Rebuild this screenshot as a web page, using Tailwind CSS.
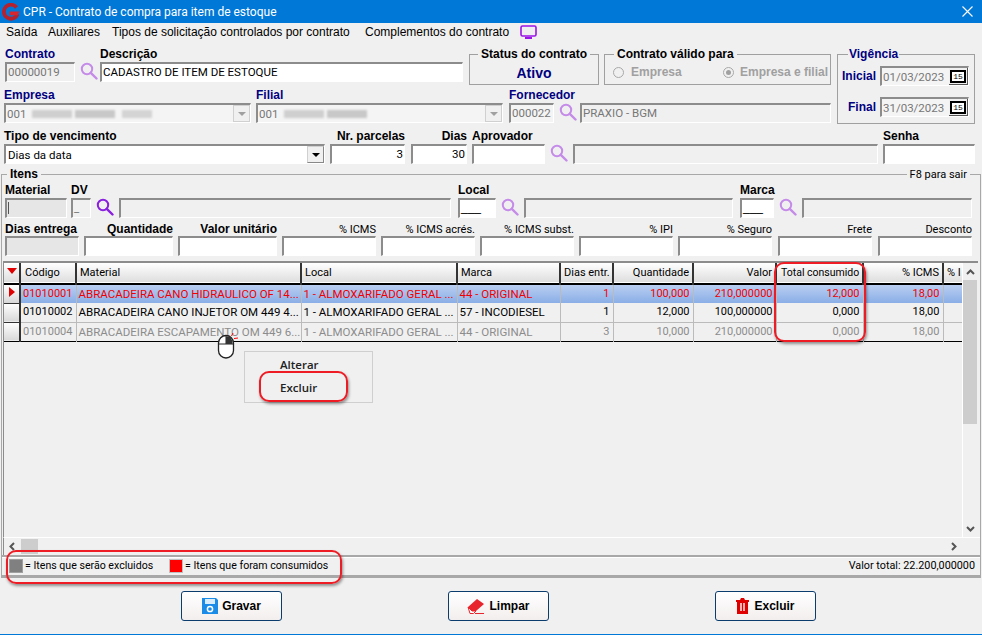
<!DOCTYPE html>
<html lang="pt-BR">
<head>
<meta charset="utf-8">
<title>CPR</title>
<script src="https://cdn.jsdelivr.net/npm/@tailwindcss/browser@4"></script>
</head>
<body class="m-0 bg-[#f0f0f0]">
<svg class="hidden">
  <symbol id="lupa" viewBox="0 0 18 18"><circle cx="7" cy="7" r="5.2" fill="none" stroke="currentColor" stroke-width="2"/><path d="M10.8 10.8L16.5 16.5" stroke="currentColor" stroke-width="2.4" stroke-linecap="round"/></symbol>
</svg>
<div class="relative w-[982px] h-[635px] overflow-hidden bg-[#f0f0f0] text-black font-['Roboto',sans-serif] text-[11.5px] leading-[16px] [&_.font-bold]:font-['Liberation_Sans',sans-serif] [&_.font-bold]:text-[12px]">

  <!-- barra de título -->
  <header class="flex items-center h-[23px] bg-[#0078d7] text-white pl-[2px] pr-[8px]">
    <svg width="18" height="18" viewBox="0 0 18 18" class="shrink-0"><path d="M14.500 4.500A7 7 0 1 0 15.500 11" fill="none" stroke="#b5222e" stroke-width="3.800"/><path d="M7.500 8.400H17.800L15.500 12.200H7.500Z" fill="#d8262f"/></svg>
    <span class="ml-[3px] text-[12px]">CPR - Contrato de compra para item de estoque</span>
    <svg width="11" height="11" viewBox="0 0 11 11" class="ml-auto mr-[1px]"><path d="M0.500 0.500L10.500 10.500M10.500 0.500L0.500 10.500" stroke="#fff" stroke-width="1.100"/></svg>
  </header>

  <!-- menu -->
  <nav class="flex items-center h-[18px] pl-[6px] font-['Liberation_Sans',sans-serif] text-[12px]">
    <span class="w-[42px]">Saída</span>
    <span class="w-[64px]">Auxiliares</span>
    <span class="w-[253px]">Tipos de solicitação controlados por contrato</span>
    <span class="w-[155px] whitespace-nowrap">Complementos do contrato</span>
    <svg width="17" height="15" viewBox="0 0 17 15"><rect x="1" y="1" width="15" height="10" rx="1.500" fill="none" stroke="#9b14e8" stroke-width="1.600"/><path d="M5 13H12" stroke="#9b14e8" stroke-width="2"/></svg>
  </nav>

  <!-- cabeçalho do contrato -->
  <section class="flex pt-[5px]">
    <div class="w-[837px] shrink-0">
      <div class="flex pl-[5px] h-[41px]">
        <div class="w-[70px]">
          <label class="block h-[16px] font-bold text-[#000080]">Contrato</label>
          <div class="h-[20px] border-t-2 border-l-2 border-r border-b border-t-[#8c8c8c] border-l-[#8c8c8c] border-r-white border-b-white bg-[#f0f0f0] text-[#777] px-[1px]">00000019</div>
        </div>
        <svg class="ml-[5px] mt-[16px] text-[#c58be8]" width="18" height="18"><use href="#lupa"/></svg>
        <div class="ml-[2px] w-[363px]">
          <label class="block h-[16px] font-bold">Descrição</label>
          <div class="h-[20px] border-t-2 border-l-2 border-r border-b border-t-[#8c8c8c] border-l-[#8c8c8c] border-r-white border-b-white bg-white px-[1px]">CADASTRO DE ITEM DE ESTOQUE</div>
        </div>
        <fieldset class="ml-[6px] w-[130px] h-[39px] border border-[#a0a0a0]">
          <legend class="ml-[8px] px-[3px] font-bold whitespace-nowrap">Status do contrato</legend>
          <div class="font-bold !text-[14px] text-center text-[#000080] mt-[3px]">Ativo</div>
        </fieldset>
        <fieldset class="ml-[5px] w-[227px] h-[39px] border border-[#a0a0a0]">
          <legend class="ml-[9px] px-[3px] font-bold whitespace-nowrap">Contrato válido para</legend>
          <div class="flex items-center text-[#a0a0a0] pl-[8px] mt-[2px]">
            <span class="w-[11px] h-[11px] rounded-full border border-[#a8a8a8]"></span>
            <span class="ml-[7px] w-[92px] font-bold">Empresa</span>
            <span class="flex items-center justify-center w-[11px] h-[11px] rounded-full border border-[#a8a8a8]"><span class="w-[5px] h-[5px] rounded-full bg-[#a0a0a0]"></span></span>
            <span class="ml-[6px] whitespace-nowrap font-bold">Empresa e filial</span>
          </div>
        </fieldset>
      </div>
      <div class="flex pl-[4px] h-[41px]">
        <div class="w-[247px]">
          <label class="block h-[16px] font-bold text-[#000080]">Empresa</label>
          <div class="flex items-center h-[20px] border-t-2 border-l-2 border-r border-b border-t-[#8c8c8c] border-l-[#8c8c8c] border-r-white border-b-white bg-[#f4f4f4] text-[#777] pl-[1px]">
            <span>001</span>
            <span class="ml-[6px] flex gap-[3px] blur-[1px]"><span class="w-[40px] h-[8px] bg-[#cfcfcf]"></span><span class="w-[40px] h-[8px] bg-[#c8c8c8]"></span><span class="ml-[4px] w-[30px] h-[8px] bg-[#d4d4d4]"></span></span>
            <span class="ml-auto flex items-center justify-center w-[17px] h-full bg-[#f0f0f0] border border-[#d0d0d0]"><span class="border-x-[4px] border-x-transparent border-t-[4px] border-t-[#a0a0a0]"></span></span>
          </div>
        </div>
        <div class="ml-[5px] w-[247px]">
          <label class="block h-[16px] font-bold text-[#000080]">Filial</label>
          <div class="flex items-center h-[20px] border-t-2 border-l-2 border-r border-b border-t-[#8c8c8c] border-l-[#8c8c8c] border-r-white border-b-white bg-[#f4f4f4] text-[#777] pl-[1px]">
            <span>001</span>
            <span class="ml-[6px] flex gap-[3px] blur-[1px]"><span class="w-[40px] h-[8px] bg-[#cfcfcf]"></span><span class="w-[40px] h-[8px] bg-[#c8c8c8]"></span></span>
            <span class="ml-auto flex items-center justify-center w-[17px] h-full bg-[#f0f0f0] border border-[#d0d0d0]"><span class="border-x-[4px] border-x-transparent border-t-[4px] border-t-[#a0a0a0]"></span></span>
          </div>
        </div>
        <div class="ml-[6px] w-[45px]">
          <label class="block h-[16px] font-bold text-[#000080] whitespace-nowrap">Fornecedor</label>
          <div class="h-[20px] border-t-2 border-l-2 border-r border-b border-t-[#8c8c8c] border-l-[#8c8c8c] border-r-white border-b-white bg-[#f4f4f4] text-[#777] px-[1px]">000022</div>
        </div>
        <svg class="ml-[5px] mt-[16px] text-[#c58be8]" width="18" height="18"><use href="#lupa"/></svg>
        <div class="ml-[3px] mt-[16px] w-[251px] h-[20px] border-t-2 border-l-2 border-r border-b border-t-[#8c8c8c] border-l-[#8c8c8c] border-r-white border-b-white bg-[#f0f0f0] text-[#777] px-[1px]">PRAXIO - BGM</div>
      </div>
    </div>
    <fieldset class="w-[138px] h-[78px] border border-[#a0a0a0]">
      <legend class="ml-[10px] px-[1px] font-bold text-[#000080]">Vigência</legend>
      <div class="flex items-center justify-end pr-[5px] h-[20px] mt-[4px]">
        <span class="font-bold text-[#000080] mr-[4px]">Inicial</span>
        <div class="flex items-center justify-between w-[89px] h-[20px] border-t-2 border-l-2 border-r border-b border-t-[#8c8c8c] border-l-[#8c8c8c] border-r-white border-b-white bg-[#f4f4f4] text-[#777] pl-[1px]">01/03/2023
          <span class="flex items-center justify-center w-[19px] h-[17px] bg-[#f0f0f0] border-r border-b border-[#555]"><span class="border-2 border-black bg-white text-black text-[8px] leading-[9px] px-[1px] font-['Liberation_Mono',monospace]">15</span></span>
        </div>
      </div>
      <div class="flex items-center justify-end pr-[5px] h-[20px] mt-[11px]">
        <span class="font-bold text-[#000080] mr-[4px]">Final</span>
        <div class="flex items-center justify-between w-[89px] h-[20px] border-t-2 border-l-2 border-r border-b border-t-[#8c8c8c] border-l-[#8c8c8c] border-r-white border-b-white bg-[#f4f4f4] text-[#777] pl-[1px]">31/03/2023
          <span class="flex items-center justify-center w-[19px] h-[17px] bg-[#f0f0f0] border-r border-b border-[#555]"><span class="border-2 border-black bg-white text-black text-[8px] leading-[9px] px-[1px] font-['Liberation_Mono',monospace]">15</span></span>
        </div>
      </div>
    </fieldset>
  </section>

  <div class="flex pl-[4px] h-[37px]">
    <div class="w-[321px]">
      <label class="block h-[16px] font-bold">Tipo de vencimento</label>
      <div class="flex items-center h-[20px] border-t-2 border-l-2 border-r border-b border-t-[#8c8c8c] border-l-[#8c8c8c] border-r-white border-b-white bg-white pl-[2px]">Dias da data
        <span class="ml-auto flex items-center justify-center w-[17px] h-full bg-[#f0f0f0] border border-[#d0d0d0] border-r-[#888] border-b-[#888]"><span class="border-x-[4px] border-x-transparent border-t-[4px] border-t-black"></span></span>
      </div>
    </div>
    <div class="ml-[5px] w-[75px]">
      <label class="block h-[16px] font-bold text-right whitespace-nowrap">Nr. parcelas</label>
      <div class="h-[20px] border-t-2 border-l-2 border-r border-b border-t-[#8c8c8c] border-l-[#8c8c8c] border-r-white border-b-white bg-white px-[1px] text-right">3</div>
    </div>
    <div class="ml-[6px] w-[56px]">
      <label class="block h-[16px] font-bold text-right">Dias</label>
      <div class="h-[20px] border-t-2 border-l-2 border-r border-b border-t-[#8c8c8c] border-l-[#8c8c8c] border-r-white border-b-white bg-white px-[1px] text-right">30</div>
    </div>
    <div class="ml-[5px] w-[73px]">
      <label class="block h-[16px] font-bold">Aprovador</label>
      <div class="h-[20px] border-t-2 border-l-2 border-r border-b border-t-[#8c8c8c] border-l-[#8c8c8c] border-r-white border-b-white bg-white"></div>
    </div>
    <svg class="ml-[5px] mt-[16px] text-[#c58be8]" width="18" height="18"><use href="#lupa"/></svg>
    <div class="ml-[5px] mt-[16px] w-[305px] h-[20px] border-t-2 border-l-2 border-r border-b border-t-[#8c8c8c] border-l-[#8c8c8c] border-r-white border-b-white bg-[#f0f0f0]"></div>
    <div class="ml-[5px] w-[92px]">
      <label class="block h-[16px] font-bold">Senha</label>
      <div class="h-[20px] border-t-2 border-l-2 border-r border-b border-t-[#8c8c8c] border-l-[#8c8c8c] border-r-white border-b-white bg-white"></div>
    </div>
  </div>

  <!-- itens -->
  <fieldset class="relative mt-[1px] ml-[1px] w-[980px] h-[412px] border-t border-x border-b-[3px] border-[#a8a8a8]">
    <legend class="ml-[5px] px-[3px] font-bold">Itens</legend>
    <span class="absolute right-[10px] -top-[15px] px-[3px] bg-[#f0f0f0] text-[11px]">F8 para sair</span>

    <div class="flex pl-[3px] h-[39px] leading-[17px]">
      <div class="w-[62px]">
        <label class="block h-[16px] font-bold">Material</label>
        <div class="h-[20px] border-t-2 border-l-2 border-r border-b border-t-[#8c8c8c] border-l-[#8c8c8c] border-r-white border-b-white bg-[#e6e6e6] pl-[1px] pt-[2px]"><span class="block w-[1px] h-[12px] bg-[#555]"></span></div>
      </div>
      <div class="ml-[4px] w-[20px]">
        <label class="block h-[16px] font-bold">DV</label>
        <div class="h-[20px] border-t-2 border-l-2 border-r border-b border-t-[#8c8c8c] border-l-[#8c8c8c] border-r-white border-b-white bg-[#f0f0f0] text-[#777] pl-[1px]">_</div>
      </div>
      <svg class="ml-[5px] mt-[16px] text-[#8a1fe0]" width="18" height="18"><use href="#lupa"/></svg>
      <div class="ml-[5px] mt-[16px] w-[332px] h-[20px] border-t-2 border-l-2 border-r border-b border-t-[#8c8c8c] border-l-[#8c8c8c] border-r-white border-b-white bg-[#f0f0f0]"></div>
      <div class="ml-[7px] w-[38px]">
        <label class="block h-[16px] font-bold">Local</label>
        <div class="h-[20px] border-t-2 border-l-2 border-r border-b border-t-[#8c8c8c] border-l-[#8c8c8c] border-r-white border-b-white bg-white pl-[1px] leading-[15px] font-['Liberation_Sans',sans-serif] text-[12px]">___</div>
      </div>
      <svg class="ml-[5px] mt-[16px] text-[#c58be8]" width="18" height="18"><use href="#lupa"/></svg>
      <div class="ml-[5px] mt-[16px] w-[209px] h-[20px] border-t-2 border-l-2 border-r border-b border-t-[#8c8c8c] border-l-[#8c8c8c] border-r-white border-b-white bg-[#f0f0f0]"></div>
      <div class="ml-[7px] w-[34px]">
        <label class="block h-[16px] font-bold">Marca</label>
        <div class="h-[20px] border-t-2 border-l-2 border-r border-b border-t-[#8c8c8c] border-l-[#8c8c8c] border-r-white border-b-white bg-white pl-[1px] leading-[15px] font-['Liberation_Sans',sans-serif] text-[12px]">___</div>
      </div>
      <svg class="ml-[5px] mt-[16px] text-[#c58be8]" width="18" height="18"><use href="#lupa"/></svg>
      <div class="ml-[5px] mt-[16px] w-[170px] h-[20px] border-t-2 border-l-2 border-r border-b border-t-[#8c8c8c] border-l-[#8c8c8c] border-r-white border-b-white bg-[#f0f0f0]"></div>
    </div>

    <div class="flex pl-[3px] h-[38px] text-right text-[11px] leading-[17px]">
      <div class="w-[74px]">
        <label class="block h-[15px] font-bold text-left whitespace-nowrap">Dias entrega</label>
        <div class="h-[20px] border-t-2 border-l-2 border-r border-b border-t-[#8c8c8c] border-l-[#8c8c8c] border-r-white border-b-white bg-[#e6e6e6]"></div>
      </div>
      <div class="ml-[5px] w-[89px]">
        <label class="block h-[15px] font-bold">Quantidade</label>
        <div class="h-[20px] border-t-2 border-l-2 border-r border-b border-t-[#8c8c8c] border-l-[#8c8c8c] border-r-white border-b-white bg-white"></div>
      </div>
      <div class="ml-[5px] w-[99px]">
        <label class="block h-[15px] font-bold">Valor unitário</label>
        <div class="h-[20px] border-t-2 border-l-2 border-r border-b border-t-[#8c8c8c] border-l-[#8c8c8c] border-r-white border-b-white bg-white"></div>
      </div>
      <div class="ml-[5px] w-[94px]">
        <label class="block h-[15px]">% ICMS</label>
        <div class="h-[20px] border-t-2 border-l-2 border-r border-b border-t-[#8c8c8c] border-l-[#8c8c8c] border-r-white border-b-white bg-white"></div>
      </div>
      <div class="ml-[5px] w-[94px]">
        <label class="block h-[15px]">% ICMS acrés.</label>
        <div class="h-[20px] border-t-2 border-l-2 border-r border-b border-t-[#8c8c8c] border-l-[#8c8c8c] border-r-white border-b-white bg-white"></div>
      </div>
      <div class="ml-[5px] w-[94px]">
        <label class="block h-[15px]">% ICMS subst.</label>
        <div class="h-[20px] border-t-2 border-l-2 border-r border-b border-t-[#8c8c8c] border-l-[#8c8c8c] border-r-white border-b-white bg-white"></div>
      </div>
      <div class="ml-[5px] w-[94px]">
        <label class="block h-[15px]">% IPI</label>
        <div class="h-[20px] border-t-2 border-l-2 border-r border-b border-t-[#8c8c8c] border-l-[#8c8c8c] border-r-white border-b-white bg-white"></div>
      </div>
      <div class="ml-[5px] w-[94px]">
        <label class="block h-[15px]">% Seguro</label>
        <div class="h-[20px] border-t-2 border-l-2 border-r border-b border-t-[#8c8c8c] border-l-[#8c8c8c] border-r-white border-b-white bg-white"></div>
      </div>
      <div class="ml-[6px] w-[94px]">
        <label class="block h-[15px]">Frete</label>
        <div class="h-[20px] border-t-2 border-l-2 border-r border-b border-t-[#8c8c8c] border-l-[#8c8c8c] border-r-white border-b-white bg-white"></div>
      </div>
      <div class="ml-[6px] w-[94px]">
        <label class="block h-[15px]">Desconto</label>
        <div class="h-[20px] border-t-2 border-l-2 border-r border-b border-t-[#8c8c8c] border-l-[#8c8c8c] border-r-white border-b-white bg-white"></div>
      </div>
    </div>

    <!-- grade -->
    <div class="flex mt-[2px] ml-[1px] w-[975px] h-[276px] border-t-2 border-l border-[#8c8c8c] text-[11px]">
      <div class="w-[958px] overflow-hidden shrink-0">
        <table class="table-fixed border-collapse w-[958px]">
          <colgroup>
            <col class="w-[16px]"><col class="w-[56px]"><col class="w-[225px]"><col class="w-[156px]"><col class="w-[103px]"><col class="w-[53px]"><col class="w-[80px]"><col class="w-[83px]"><col class="w-[87px]"><col class="w-[80px]"><col class="w-[19px]">
          </colgroup>
          <thead>
            <tr class="h-[21px] bg-gradient-to-b from-white to-[#dedede] border-b-2 border-black">
              <th class="border-r-2 border-[#333] p-0"><span class="inline-block mb-[2px] border-x-[5px] border-x-transparent border-t-[6px] border-t-[#e00000]"></span></th>
              <th class="border-r-2 border-[#333] px-[4px] text-left font-normal">Código</th>
              <th class="border-r-2 border-[#333] px-[3px] text-left font-normal">Material</th>
              <th class="border-r-2 border-[#333] px-[3px] text-left font-normal">Local</th>
              <th class="border-r-2 border-[#333] px-[3px] text-left font-normal">Marca</th>
              <th class="border-r-2 border-[#333] px-[3px] text-right font-normal whitespace-nowrap overflow-hidden">Dias entr.</th>
              <th class="border-r-2 border-[#333] px-[3px] text-right font-normal">Quantidade</th>
              <th class="border-r-2 border-[#333] px-[3px] text-right font-normal">Valor</th>
              <th class="border-r-2 border-[#333] px-[4px] text-right font-normal whitespace-nowrap text-[10.5px]">Total consumido</th>
              <th class="border-r-2 border-[#333] px-[3px] text-right font-normal">% ICMS</th>
              <th class="px-[3px] text-left font-normal whitespace-nowrap overflow-hidden">% I</th>
            </tr>
          </thead>
          <tbody class="whitespace-nowrap">
            <tr class="h-[19px] bg-gradient-to-b from-[#bcd0f2] to-[#8aaee6] text-[#f00000]">
              <td class="border-r-2 border-b border-[#333] bg-gradient-to-b from-white to-[#d8d8d8] p-0 text-center"><span class="inline-block border-y-[5px] border-y-transparent border-l-[6px] border-l-[#e00000]"></span></td>
              <td class="border-r border-[#bbb] px-[2px] overflow-hidden">01010001</td>
              <td class="border-r border-[#bbb] px-[2px] overflow-hidden text-[11.5px]">ABRACADEIRA CANO HIDRAULICO OF 14...</td>
              <td class="border-r border-[#bbb] px-[2px] overflow-hidden text-[11.5px]">1 - ALMOXARIFADO GERAL ...</td>
              <td class="border-r border-[#bbb] px-[2px] overflow-hidden text-[11.5px]">44 - ORIGINAL</td>
              <td class="border-r border-[#bbb] px-[3px] text-right">1</td>
              <td class="border-r border-[#bbb] px-[3px] text-right">100,000</td>
              <td class="border-r border-[#bbb] px-[3px] text-right">210,000000</td>
              <td class="border-r border-[#bbb] px-[3px] text-right">12,000</td>
              <td class="border-r border-[#bbb] px-[3px] text-right">18,00</td>
              <td></td>
            </tr>
            <tr class="h-[19px] border-b border-[#bbb]">
              <td class="border-r-2 border-b border-[#333] bg-gradient-to-b from-white to-[#d8d8d8] p-0"></td>
              <td class="border-r border-[#bbb] px-[2px] overflow-hidden">01010002</td>
              <td class="border-r border-[#bbb] px-[2px] overflow-hidden text-[11.5px]">ABRACADEIRA CANO INJETOR OM 449 4...</td>
              <td class="border-r border-[#bbb] px-[2px] overflow-hidden text-[11.5px]">1 - ALMOXARIFADO GERAL ...</td>
              <td class="border-r border-[#bbb] px-[2px] overflow-hidden text-[11.5px]">57 - INCODIESEL</td>
              <td class="border-r border-[#bbb] px-[3px] text-right">1</td>
              <td class="border-r border-[#bbb] px-[3px] text-right">12,000</td>
              <td class="border-r border-[#bbb] px-[3px] text-right">100,000000</td>
              <td class="border-r border-[#bbb] px-[3px] text-right">0,000</td>
              <td class="border-r border-[#bbb] px-[3px] text-right">18,00</td>
              <td></td>
            </tr>
            <tr class="h-[19px] border-b border-black text-[#8c8c8c]">
              <td class="border-r-2 border-[#333] bg-gradient-to-b from-white to-[#d8d8d8] p-0"></td>
              <td class="border-r border-[#bbb] px-[2px] overflow-hidden">01010004</td>
              <td class="border-r border-[#bbb] px-[2px] overflow-hidden text-[11.5px]">ABRACADEIRA ESCAPAMENTO OM 449 6...</td>
              <td class="border-r border-[#bbb] px-[2px] overflow-hidden text-[11.5px]">1 - ALMOXARIFADO GERAL ...</td>
              <td class="border-r border-[#bbb] px-[2px] overflow-hidden text-[11.5px]">44 - ORIGINAL</td>
              <td class="border-r border-[#bbb] px-[3px] text-right">3</td>
              <td class="border-r border-[#bbb] px-[3px] text-right">10,000</td>
              <td class="border-r border-[#bbb] px-[3px] text-right">210,000000</td>
              <td class="border-r border-[#bbb] px-[3px] text-right">0,000</td>
              <td class="border-r border-[#bbb] px-[3px] text-right">18,00</td>
              <td></td>
            </tr>
          </tbody>
        </table>
      </div>
      <!-- barra vertical -->
      <div class="flex flex-col w-[15px] border-l border-white">
        <div class="flex items-center justify-center h-[17px]"><svg width="9" height="6" viewBox="0 0 9 6"><path d="M1 5L4.500 1.500L8 5" fill="none" stroke="#555" stroke-width="2"/></svg></div>
        <div class="h-[144px] bg-[#cdcdcd]"></div>
        <div class="flex-1"></div>
        <div class="flex items-center justify-center h-[17px]"><svg width="9" height="6" viewBox="0 0 9 6"><path d="M1 1L4.500 4.500L8 1" fill="none" stroke="#555" stroke-width="2"/></svg></div>
      </div>
    </div>
    <!-- barra horizontal -->
    <div class="flex items-center ml-[1px] h-[18px] border-t border-white border-l border-l-[#8c8c8c]">
      <svg class="ml-[5px]" width="6" height="9" viewBox="0 0 6 9"><path d="M5 1L1.500 4.500L5 8" fill="none" stroke="#555" stroke-width="2"/></svg>
      <div class="ml-[6px] w-[17px] h-[15px] bg-[#cdcdcd]"></div>
      <svg class="ml-auto mr-[23px]" width="6" height="9" viewBox="0 0 6 9"><path d="M1 1L4.500 4.500L1 8" fill="none" stroke="#555" stroke-width="2"/></svg>
    </div>
    <!-- rodapé -->
    <div class="flex items-center h-[20px] border-t-2 border-[#a8a8a8] pl-[7px] pr-[5px] text-[10.6px] shadow-[inset_0_1px_0_#fff]">
      <span class="w-[14px] h-[14px] bg-[#808080] border border-[#a0a0a0]"></span>
      <span class="ml-[2px] w-[144px]">= Itens que serão excluidos</span>
      <span class="w-[14px] h-[14px] bg-[#ff0000] border border-[#c0c0c0]"></span>
      <span class="ml-[2px]">= Itens que foram consumidos</span>
      <span class="ml-auto text-[10.8px]">Valor total: 22.200,000000</span>
    </div>
  </fieldset>

  <!-- botões -->
  <div class="flex mt-[13px] pl-[181px] gap-[166px]">
    <button class="flex items-center justify-center gap-[4px] w-[101px] h-[30px] border border-[#0b3c6e] rounded-[3px] bg-gradient-to-b from-white to-[#f3eeee] font-bold">
      <svg width="16" height="16" viewBox="0 0 16 16"><path d="M0 0H14L16 2V16H0Z" fill="#1a8ce8"/><rect x="3" y="1" width="10" height="5" fill="#d9ecfb"/><circle cx="8" cy="11" r="2.600" fill="none" stroke="#fff" stroke-width="1.500"/></svg>Gravar
    </button>
    <button class="flex items-center justify-center gap-[4px] w-[101px] h-[30px] border border-[#0b3c6e] rounded-[3px] bg-gradient-to-b from-white to-[#f3eeee] font-bold">
      <svg width="18" height="16" viewBox="0 0 18 16"><path d="M1 9L10 1L17 6L9 13H5Z" fill="#e8242c"/><path d="M1 9L5 13H9L6.500 15.500H3Z" fill="#fff" stroke="#e8242c"/><path d="M8 15.500H17" stroke="#e8242c"/></svg>Limpar
    </button>
    <button class="flex items-center justify-center gap-[5px] w-[101px] h-[30px] border border-[#0b3c6e] rounded-[3px] bg-gradient-to-b from-white to-[#f3eeee] font-bold">
      <svg width="13" height="16" viewBox="0 0 13 16"><path d="M0 2H4L5 0H8L9 2H13V4H12V16H1V4H0Z" fill="#e00000"/><path d="M5 5V13M8 5V13" stroke="#fff" stroke-width="1.400"/></svg>Excluir
    </button>
  </div>

  <!-- linha inferior -->
  <div class="absolute left-0 right-0 bottom-0 h-[1px] bg-[#0078d7]"></div>

  <!-- menu de contexto sobreposto -->
  <div class="absolute left-[244px] top-[351px] w-[129px] h-[52px] border border-[#cfcfcf] bg-[#f0f0f0] pl-[35px] pt-[5px] text-[#222] font-['Open_Sans',sans-serif] text-[11.5px] font-semibold">
    <div class="h-[23px]">Alterar</div>
    <div>Excluir</div>
  </div>

  <!-- cursor -->
  <svg class="absolute left-[217px] top-[331px]" width="22" height="30" viewBox="0 0 22 30">
    <rect x="1.500" y="4.500" width="15" height="22.500" rx="7.500" fill="#fff" stroke="#222" stroke-width="1.300"/>
    <path d="M2 13H16M9 4.500V13" stroke="#222"/>
    <path d="M9 5.500H13L15.500 10V13H9Z" fill="#333"/>
    <path d="M14.500 5L16 2M17 7.500L21 7" stroke="#f00"/>
  </svg>

  <!-- destaques em vermelho -->
  <div class="absolute left-[774px] top-[262px] w-[92px] h-[80px] rounded-[10px] border-2 border-[#ee1c25] shadow-[1px_2px_3px_rgba(0,0,0,0.4)]"></div>
  <div class="absolute left-[259px] top-[371px] w-[89px] h-[31px] rounded-[10px] border-2 border-[#ee1c25] shadow-[1px_2px_3px_rgba(0,0,0,0.4)]"></div>
  <div class="absolute left-[6px] top-[550px] w-[336px] h-[34px] rounded-[10px] border-2 border-[#ee1c25] shadow-[1px_2px_3px_rgba(0,0,0,0.4)]"></div>
</div>
</body>
</html>
